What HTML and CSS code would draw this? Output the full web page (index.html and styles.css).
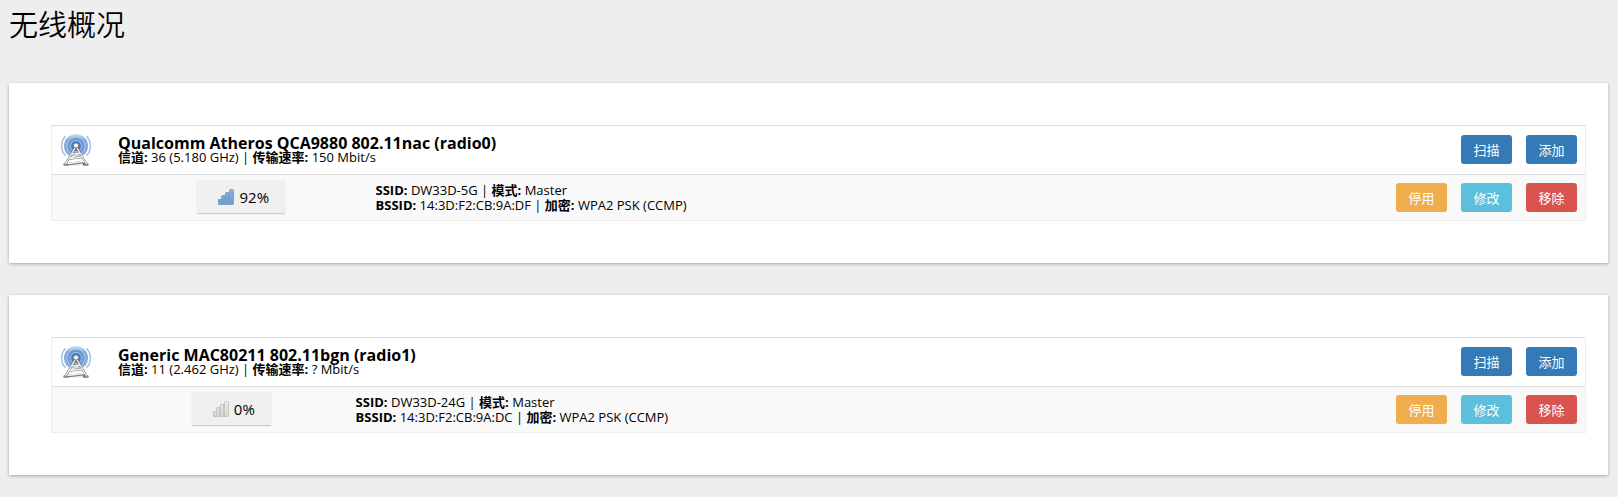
FILE: index.html
```html
<!DOCTYPE html>
<html lang="zh-CN">
<head>
    <meta charset="UTF-8">
    <meta name="viewport" content="width=device-width, initial-scale=1.0">
    <title>无线概况</title>
    <link rel="stylesheet" href="styles.css">
</head>
<body>

<!-- shared icons -->
<svg class="sprite" aria-hidden="true">
    <defs>
        <linearGradient id="wave" x1="0" y1="0" x2="0" y2="1">
            <stop offset="0" stop-color="#8fb2df" stop-opacity="0.4"/>
            <stop offset="0.25" stop-color="#84abdc"/>
            <stop offset="0.8" stop-color="#84abdc"/>
            <stop offset="1" stop-color="#8fb2df" stop-opacity="0.2"/>
        </linearGradient>
        <linearGradient id="blueBar" x1="0" y1="0" x2="0" y2="1">
            <stop offset="0" stop-color="#8fb3dc"/>
            <stop offset="1" stop-color="#6c9bd1"/>
        </linearGradient>
        <linearGradient id="greyBar" x1="0" y1="0" x2="0" y2="1">
            <stop offset="0" stop-color="#eeeeec"/>
            <stop offset="1" stop-color="#d3d7cf"/>
        </linearGradient>
    </defs>
    <symbol id="radio" viewBox="0 0 32 32">
        <ellipse cx="16" cy="30" rx="12" ry="1.500" fill="#000" opacity="0.1"/>
        <circle cx="16" cy="12" r="12" fill="url(#wave)"/>
        <circle cx="16" cy="12" r="8.500" fill="#6d9bd4"/>
        <circle cx="16" cy="12" r="5" fill="#4478bd"/>
        <g fill="none" stroke="#b9d0ed" stroke-width="0.700">
            <circle cx="16" cy="12" r="5.500"/>
            <circle cx="16" cy="12" r="9"/>
        </g>
        <g fill="none" stroke="#a3bfe4" stroke-width="1.500">
            <path d="M5.500 2.200A14.300 14.300 0 0 0 5.500 21.800"/>
            <path d="M26.500 2.200A14.300 14.300 0 0 1 26.500 21.800"/>
        </g>
        <g fill="none" stroke="#777a74" stroke-width="2.400" stroke-linecap="round" stroke-linejoin="round">
            <path d="M15 14L5.500 30M17 14L26.500 30M12.500 20L20 19M10 24.500L22 23M9 30L24 28M4.500 30.500H8M24 30.500H27.500"/>
        </g>
        <g fill="none" stroke="#f1f1ef" stroke-width="1.300" stroke-linecap="round" stroke-linejoin="round">
            <path d="M15 14L5.500 30M17 14L26.500 30M12.500 20L20 19M10 24.500L22 23M8 29.500L24 27.500M20 19L10 24.500"/>
        </g>
        <circle cx="16" cy="11.500" r="2.600" fill="#f6f6f4" stroke="#7c7e79"/>
    </symbol>
    <symbol id="bars" viewBox="0 0 16 16">
        <path d="M0.500 10.500h3v5h-3zM3.500 7.500q0-1 1-1h2v9h-3zM7.500 4.500q0-1 1-1h2v12h-3zM11.500 1.500q0-1 1-1h2q1 0 1 1v13q0 1-1 1h-3z"/>
    </symbol>
</svg>

<h2 class="page-title">无线概况</h2>

<section class="card">
    <table class="radio-table">
        <colgroup>
            <col class="col-icon">
            <col class="col-signal wide">
            <col>
            <col class="col-actions">
        </colgroup>
        <tbody>
            <tr class="device">
                <td class="icon-cell"><svg class="radio-icon" aria-hidden="true"><use href="#radio"/></svg></td>
                <td colspan="2" class="device-info">
                    <strong class="device-name">Qualcomm Atheros QCA9880 802.11nac (radio0)</strong>
                    <div><strong>信道:</strong> 36 (5.180 GHz) | <strong>传输速率:</strong> 150 Mbit/s</div>
                </td>
                <td class="action-cell">
                    <div class="actions">
                        <button type="button" class="btn primary">扫描</button>
                        <button type="button" class="btn primary">添加</button>
                    </div>
                </td>
            </tr>
            <tr class="network">
                <td></td>
                <td class="signal-cell"><span class="signal"><svg class="bars on" aria-hidden="true"><use href="#bars"/></svg>92%</span></td>
                <td class="network-info">
                    <div><strong>SSID:</strong> DW33D-5G | <strong>模式:</strong> Master</div>
                    <div><strong>BSSID:</strong> 14:3D:F2:CB:9A:DF | <strong>加密:</strong> WPA2 PSK (CCMP)</div>
                </td>
                <td class="action-cell">
                    <div class="actions">
                        <button type="button" class="btn warning">停用</button>
                        <button type="button" class="btn info">修改</button>
                        <button type="button" class="btn danger">移除</button>
                    </div>
                </td>
            </tr>
        </tbody>
    </table>
</section>

<section class="card">
    <table class="radio-table">
        <colgroup>
            <col class="col-icon">
            <col class="col-signal">
            <col>
            <col class="col-actions">
        </colgroup>
        <tbody>
            <tr class="device">
                <td class="icon-cell"><svg class="radio-icon" aria-hidden="true"><use href="#radio"/></svg></td>
                <td colspan="2" class="device-info">
                    <strong class="device-name">Generic MAC80211 802.11bgn (radio1)</strong>
                    <div><strong>信道:</strong> 11 (2.462 GHz) | <strong>传输速率:</strong> ? Mbit/s</div>
                </td>
                <td class="action-cell">
                    <div class="actions">
                        <button type="button" class="btn primary">扫描</button>
                        <button type="button" class="btn primary">添加</button>
                    </div>
                </td>
            </tr>
            <tr class="network">
                <td></td>
                <td class="signal-cell"><span class="signal"><svg class="bars off" aria-hidden="true"><use href="#bars"/></svg>0%</span></td>
                <td class="network-info">
                    <div><strong>SSID:</strong> DW33D-24G | <strong>模式:</strong> Master</div>
                    <div><strong>BSSID:</strong> 14:3D:F2:CB:9A:DC | <strong>加密:</strong> WPA2 PSK (CCMP)</div>
                </td>
                <td class="action-cell">
                    <div class="actions">
                        <button type="button" class="btn warning">停用</button>
                        <button type="button" class="btn info">修改</button>
                        <button type="button" class="btn danger">移除</button>
                    </div>
                </td>
            </tr>
        </tbody>
    </table>
</section>

</body>
</html>
```
FILE: styles.css
```css
*{box-sizing:border-box;}
body{margin:0;padding:8px 10px 20px 9px;background:#eee;color:#000;font-family:"Open Sans","Noto Sans CJK SC",sans-serif;font-size:13px;}
.sprite{position:absolute;width:0;height:0;}

.page-title{margin:0 0 41px;font-size:29px;line-height:34px;font-weight:350;}

.card{margin-bottom:32px;padding:42px 22px 42px 42px;background:#fff;box-shadow:0 1px 3px rgba(0,0,0,.3);}
.card:last-child{margin-bottom:0;}

.radio-table{width:100%;table-layout:fixed;border-collapse:separate;border-spacing:0;border:1px solid #eee;border-top:1px solid #ddd;}
.radio-table td{padding:0 8px;text-align:left;vertical-align:middle;}
.col-icon{width:58px;}
.col-signal{width:15.5%;}
.col-signal.wide{width:16.8%;}
.col-actions{width:200px;}

.device td{height:48px;}
.network td{height:46px;background:#f9f9f9;border-top:1px solid #ddd;}
.radio-table .action-cell{padding-top:8px;vertical-align:top;}
.device .actions{padding-top:1px;}
.radio-icon{display:block;width:32px;height:32px;}
.device-name{display:block;font-size:16px;line-height:14px;}
.device-info{line-height:14px;}
.network-info{line-height:15px;}

.radio-table .signal-cell{padding-left:13px;text-align:center;}
.signal{display:inline-flex;align-items:center;gap:5px;height:33px;padding:0 16px 0 21px;background:#f0f0f0;border-bottom:1px solid #ccc;box-shadow:0 0 2px rgba(0,0,0,.1);font-size:15px;vertical-align:middle;}
.bars{width:16px;height:16px;}
.bars.on{fill:url(#blueBar);stroke:#759fd1;}
.bars.off{fill:url(#greyBar);stroke:#c3c6bf;}

.actions{display:flex;justify-content:flex-end;gap:14px;}
.btn{width:51px;height:29px;padding:0;border:0;border-radius:3px;color:#fff;font-family:inherit;font-size:13px;cursor:pointer;}
.btn:hover{opacity:.9;}
.primary{background:#337ab7;}
.warning{background:#f0ad4e;}
.info{background:#5bc0de;}
.danger{background:#d9534f;}
```
